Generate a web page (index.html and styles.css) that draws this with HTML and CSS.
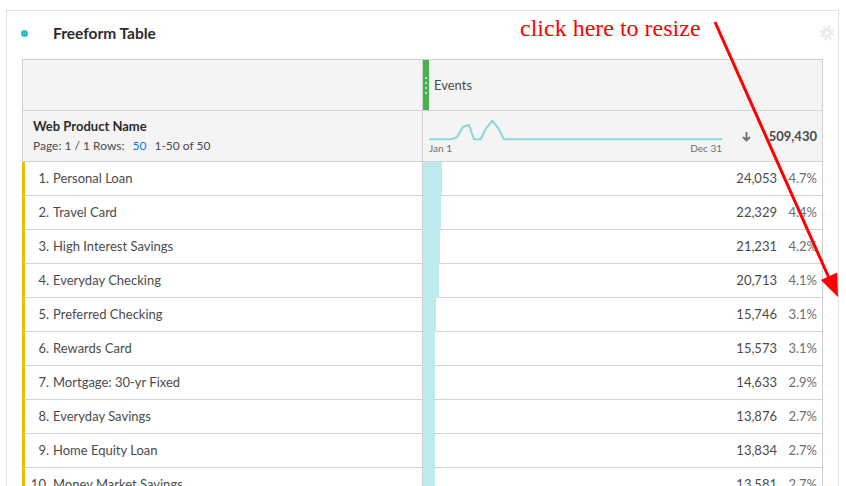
FILE: index.html
```html
<!DOCTYPE html>
<html lang="en">
<head>
<meta charset="utf-8">
<title>Freeform Table</title>
<link rel="stylesheet" href="styles.css">
</head>
<body>
<div class="panel">
  <div class="panel-head">
    <span class="dot"></span>
    <h1 class="title">Freeform Table</h1>
    <svg class="gear" width="16" height="16" viewBox="0 0 16 16">
      <circle cx="8" cy="8" r="6" fill="none" stroke="#ececec" stroke-width="3" stroke-dasharray="2.4 2.31"/>
      <circle cx="8" cy="8" r="5" fill="#ececec"/>
      <circle cx="8" cy="8" r="2" fill="#fff"/>
    </svg>
  </div>
  <div class="ft">
    <div class="row head1">
      <div class="cell lcell"></div>
      <div class="cell rcell">
        <span class="grip"><i></i><i></i><i></i><i></i></span>
        <span class="metric">Events</span>
      </div>
    </div>
    <div class="row head2">
      <div class="cell lcell">
        <div class="dim">Web Product Name</div>
        <div class="pager">Page: 1 / 1 Rows:<span class="rows">50</span><span class="range">1-50 of 50</span></div>
      </div>
      <div class="cell rcell">
        <div class="spark">
          <svg width="293" height="24" viewBox="0 0 293 24">
            <polyline fill="none" stroke="#8ad6dd" stroke-width="2" stroke-linejoin="round" points="0,21.3 22.4,21.3 28,19.3 34,8.7 40,7 45,21.3 51.7,21.3 57,10.3 63.3,2.7 69.3,10.3 75,21.3 293,21.3"/>
          </svg>
          <div class="spark-labels"><span>Jan 1</span><span>Dec 31</span></div>
        </div>
        <svg class="sort" width="9" height="11" viewBox="0 0 9 11">
          <path d="M4.5 1 V9.5 M1 6 L4.5 9.5 L8 6" fill="none" stroke="#6e6e6e" stroke-width="1.8"/>
        </svg>
        <span class="total">509,430</span>
      </div>
    </div>
    <div class="row data">
      <div class="cell lcell"><span class="num">1.</span><span class="label">Personal Loan</span></div>
      <div class="cell rcell"><span class="bar" style="width:19px"></span><span class="val">24,053</span><span class="pct">4.7%</span></div>
    </div>
    <div class="row data">
      <div class="cell lcell"><span class="num">2.</span><span class="label">Travel Card</span></div>
      <div class="cell rcell"><span class="bar" style="width:17.5px"></span><span class="val">22,329</span><span class="pct">4.4%</span></div>
    </div>
    <div class="row data">
      <div class="cell lcell"><span class="num">3.</span><span class="label">High Interest Savings</span></div>
      <div class="cell rcell"><span class="bar" style="width:17px"></span><span class="val">21,231</span><span class="pct">4.2%</span></div>
    </div>
    <div class="row data">
      <div class="cell lcell"><span class="num">4.</span><span class="label">Everyday Checking</span></div>
      <div class="cell rcell"><span class="bar" style="width:16px"></span><span class="val">20,713</span><span class="pct">4.1%</span></div>
    </div>
    <div class="row data">
      <div class="cell lcell"><span class="num">5.</span><span class="label">Preferred Checking</span></div>
      <div class="cell rcell"><span class="bar" style="width:12.5px"></span><span class="val">15,746</span><span class="pct">3.1%</span></div>
    </div>
    <div class="row data">
      <div class="cell lcell"><span class="num">6.</span><span class="label">Rewards Card</span></div>
      <div class="cell rcell"><span class="bar" style="width:12px"></span><span class="val">15,573</span><span class="pct">3.1%</span></div>
    </div>
    <div class="row data">
      <div class="cell lcell"><span class="num">7.</span><span class="label">Mortgage: 30-yr Fixed</span></div>
      <div class="cell rcell"><span class="bar" style="width:12px"></span><span class="val">14,633</span><span class="pct">2.9%</span></div>
    </div>
    <div class="row data">
      <div class="cell lcell"><span class="num">8.</span><span class="label">Everyday Savings</span></div>
      <div class="cell rcell"><span class="bar" style="width:12px"></span><span class="val">13,876</span><span class="pct">2.7%</span></div>
    </div>
    <div class="row data">
      <div class="cell lcell"><span class="num">9.</span><span class="label">Home Equity Loan</span></div>
      <div class="cell rcell"><span class="bar" style="width:12px"></span><span class="val">13,834</span><span class="pct">2.7%</span></div>
    </div>
    <div class="row data">
      <div class="cell lcell"><span class="num">10.</span><span class="label">Money Market Savings</span></div>
      <div class="cell rcell"><span class="bar" style="width:12px"></span><span class="val">13,581</span><span class="pct">2.7%</span></div>
    </div>
  </div>
</div>
<div class="annot">click here to resize</div>
<svg class="arrow" width="846" height="486" viewBox="0 0 846 486">
  <line x1="715" y1="22" x2="829" y2="278" stroke="#ff0000" stroke-width="3"/>
  <polygon points="838,297 837.2,272.5 820.8,280" fill="#ff0000"/>
</svg>
</body>
</html>
```

FILE: styles.css
```css
html, body {
  margin: 0;
  padding: 0;
  overflow: hidden;
  background: #fff;
}
body {
  font-family: Lato, "Open Sans", sans-serif;
  color: #4b4b4b;
  width: 846px;
  height: 486px;
  position: relative;
}
.panel {
  margin: 10px 7px 0 6px;
  border: 1px solid #e1e1e1;
  border-bottom: none;
  padding-bottom: 40px;
}
.panel-head {
  height: 44px;
  display: flex;
  align-items: center;
  padding: 0 3px 0 14px;
}
.dot {
  width: 7px;
  height: 7px;
  border-radius: 50%;
  background: #2ebdcc;
  flex: none;
}
.title {
  margin: 0 0 0 25px;
  font-size: 15.5px;
  font-weight: 700;
  color: #2c2c2c;
  line-height: 20px;
}
.gear {
  margin-left: auto;
  display: block;
}
.ft {
  margin: 4px 0 0 15px;
  width: 800px;
  border-top: 1px solid #d0d0d0;
  border-right: 1px solid #d0d0d0;
}
.row {
  display: grid;
  grid-template-columns: 400px 400px;
}
.cell {
  box-sizing: border-box;
  border-bottom: 1px solid #d3d3d3;
}
.head1 .cell, .head2 .cell {
  height: 51px;
  background: #f4f4f4;
}
.head1 .lcell, .head2 .lcell {
  border-left: 1px solid #d0d0d0;
}
.rcell {
  border-left: 1px solid #d0d0d0;
  display: flex;
  align-items: center;
}
.head1 .rcell {
  align-items: stretch;
}
.grip {
  width: 6px;
  background: #45b44f;
  display: flex;
  flex-direction: column;
  align-items: center;
  justify-content: center;
  gap: 3px;
}
.grip i {
  display: block;
  width: 2px;
  height: 2px;
  background: #b5e3ba;
}
.metric {
  margin-left: 5px;
  font-size: 13px;
  align-self: center;
  color: #4b4b4b;
}
.head2 .lcell {
  display: flex;
  flex-direction: column;
  justify-content: center;
  padding-left: 10px;
}
.dim {
  font-size: 13px;
  font-weight: 700;
  color: #2c2c2c;
  line-height: 18px;
}
.pager {
  font-size: 12px;
  line-height: 18px;
  margin-top: 2px;
  color: #4b4b4b;
}
.rows {
  margin-left: 8px;
  color: #1473e6;
}
.range {
  margin-left: 8px;
}
.head2 .rcell {
  padding-left: 6px;
  padding-right: 5px;
}
.spark svg {
  display: block;
}
.spark-labels {
  display: flex;
  justify-content: space-between;
  font-size: 10px;
  line-height: 12px;
  color: #6e6e6e;
}
.sort {
  margin-left: 20px;
  display: block;
}
.total {
  margin-left: auto;
  font-size: 13px;
  font-weight: 700;
  color: #4b4b4b;
}
.data .cell {
  height: 34px;
  padding-bottom: 2px;
}
.data .lcell {
  border-left: 3px solid #e5c100;
  display: flex;
  align-items: center;
  font-size: 13px;
}
.num {
  width: 24px;
  text-align: right;
  margin-right: 4px;
}
.data .rcell {
  position: relative;
  justify-content: flex-end;
  padding-right: 5px;
  font-size: 13px;
}
.bar {
  position: absolute;
  left: 0;
  top: 0;
  bottom: -1px;
  background: #bdeaed;
}
.val {
  color: #4b4b4b;
}
.pct {
  width: 40px;
  text-align: right;
  color: #6e6e6e;
}
.annot {
  position: absolute;
  left: 520px;
  top: 16px;
  font-family: "Liberation Serif", serif;
  font-size: 24px;
  line-height: 24px;
  color: #ff0000;
}
.arrow {
  position: absolute;
  left: 0;
  top: 0;
  pointer-events: none;
}
```
